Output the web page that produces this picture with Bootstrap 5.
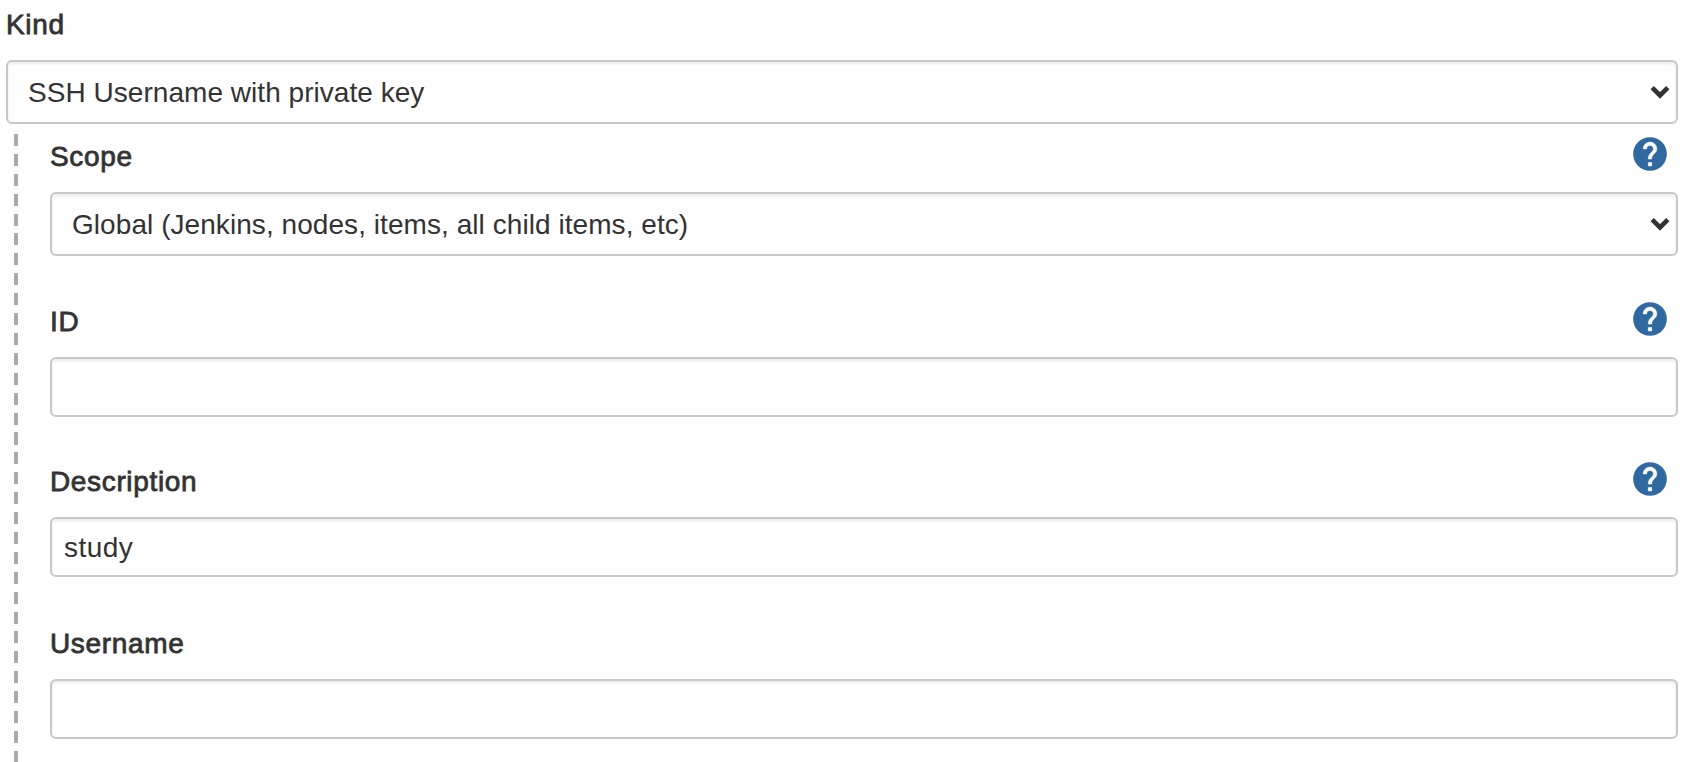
<!DOCTYPE html>
<html lang="en">
<head>
  <meta charset="UTF-8">
  <title>Add Credentials</title>
  <link href="https://cdn.jsdelivr.net/npm/bootstrap@5.3.3/dist/css/bootstrap.min.css" rel="stylesheet">
  <style>
    body {
      background: #fefefe;
      color: #333;
      font-family: "Liberation Sans", Arial, sans-serif;
      font-size: 28px;
      overflow: hidden;
    }
    .cred-form {
      height: 762px;
      padding: 8px 18px 0 6px;
    }
    .cred-form .form-label {
      height: 32px;
      margin-bottom: 20px;
      padding-top: 1px;
      line-height: 32px;
      letter-spacing: .65px;
      -webkit-text-stroke: .8px #333;
    }
    .cred-form .form-control,
    .cred-form .form-select {
      height: 60px;
      padding: 1px 12px 0;
      border: 2px solid #c8c8c8;
      border-radius: 6px;
      background-color: #fefefe;
      color: #333;
      font-size: 28px;
      line-height: 55px;
      letter-spacing: .45px;
      box-shadow: inset 0 2px 3px rgba(0, 0, 0, .08);
    }
    .cred-form .form-select {
      height: 64px;
      padding: 1px 50px 0 20px;
      line-height: 60px;
      letter-spacing: .06px;
      background-image: url("data:image/svg+xml,%3csvg xmlns='http://www.w3.org/2000/svg' viewBox='0 0 20 14'%3e%3cpath fill='none' stroke='%23333' stroke-width='4.7' d='m2.2 2.6 7.8 7.8 7.8-7.8'/%3e%3c/svg%3e");
      background-position: right 6px center;
      background-size: 20px 14px;
    }
    #kind { letter-spacing: .04px; }

    /* settings that belong to the selected kind */
    .nested-fields {
      margin-top: 10px;
      padding: 6px 0 0 44px;
      background: repeating-linear-gradient(#aaa 0 12px, transparent 12px 19.9px) 8px 0 / 4px 100% no-repeat;
    }
    .gap-scope { margin-bottom: 49px; }
    .gap-id { margin-bottom: 48px; }
    .gap-description { margin-bottom: 50px; }
    .help-link {
      width: 34px;
      height: 34px;
      margin: -3px 11px 0 0;
      line-height: 0;
    }
  </style>
</head>
<body>
  <svg class="d-none" xmlns="http://www.w3.org/2000/svg">
    <symbol id="help" viewBox="2 2 20 20">
      <circle cx="12" cy="12" r="9.9" fill="#2f699f"/>
      <path fill="#fff" stroke="#fff" stroke-width=".3" d="M13 19h-2v-2h2v2zm2.07-7.75-.9.92C13.45 12.9 13 13.5 13 15h-2v-.5c0-1.1.45-2.1 1.17-2.83l1.24-1.26c.37-.36.59-.86.59-1.41 0-1.1-.9-2-2-2s-2 .9-2 2H8c0-2.21 1.79-4 4-4s4 1.79 4 4c0 .88-.36 1.68-.93 2.25z"/>
    </symbol>
  </svg>

  <form class="cred-form d-flex flex-column">
    <div>
      <label class="form-label d-block" for="kind">Kind</label>
      <select class="form-select" id="kind">
        <option>SSH Username with private key</option>
      </select>
    </div>

    <div class="nested-fields flex-grow-1">
      <div class="gap-scope">
        <div class="d-flex justify-content-between">
          <label class="form-label" for="scope">Scope</label>
          <a class="help-link" href="#" aria-label="Help for Scope"><svg width="34" height="34"><use href="#help"/></svg></a>
        </div>
        <select class="form-select" id="scope">
          <option>Global (Jenkins, nodes, items, all child items, etc)</option>
        </select>
      </div>

      <div class="gap-id">
        <div class="d-flex justify-content-between">
          <label class="form-label" for="credId">ID</label>
          <a class="help-link" href="#" aria-label="Help for ID"><svg width="34" height="34"><use href="#help"/></svg></a>
        </div>
        <input type="text" class="form-control" id="credId">
      </div>

      <div class="gap-description">
        <div class="d-flex justify-content-between">
          <label class="form-label" for="description">Description</label>
          <a class="help-link" href="#" aria-label="Help for Description"><svg width="34" height="34"><use href="#help"/></svg></a>
        </div>
        <input type="text" class="form-control" id="description" value="study">
      </div>

      <div>
        <label class="form-label d-block" for="username">Username</label>
        <input type="text" class="form-control" id="username">
      </div>
    </div>
  </form>

  <script src="https://cdn.jsdelivr.net/npm/bootstrap@5.3.3/dist/js/bootstrap.bundle.min.js"></script>
</body>
</html>
